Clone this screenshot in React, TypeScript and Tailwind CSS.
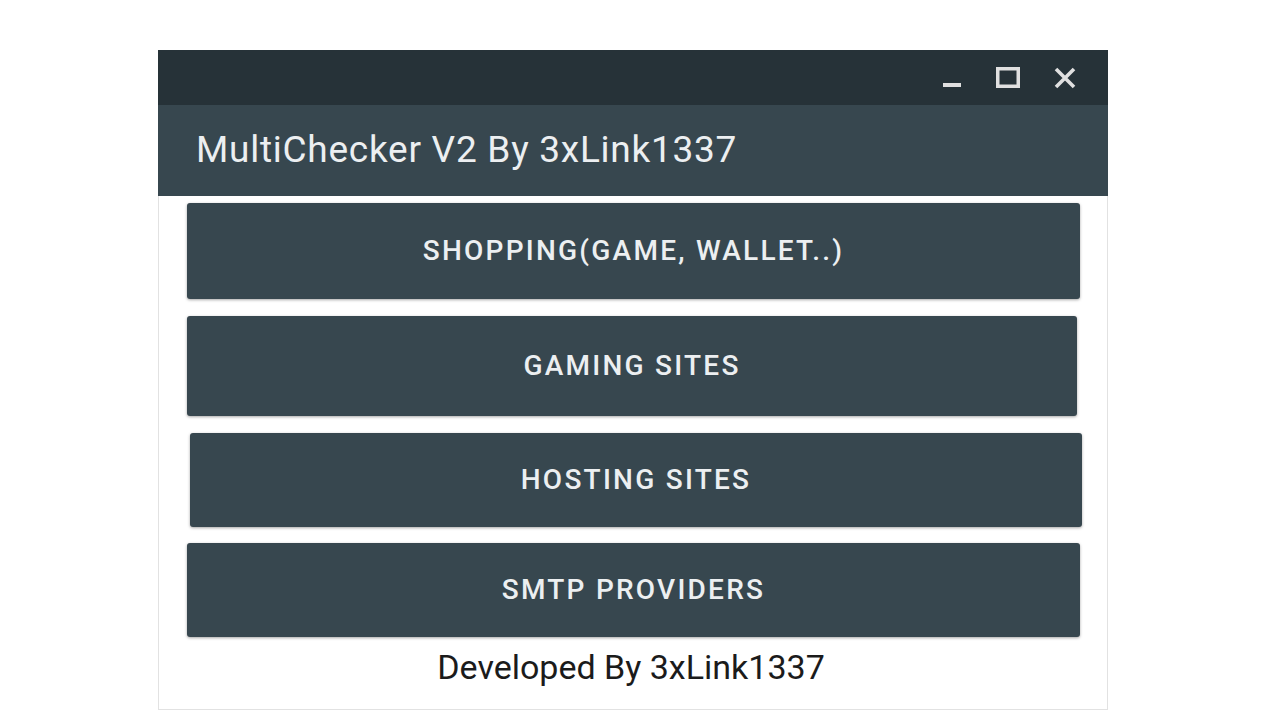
import React from "react";

const buttons = [
  { label: "SHOPPING(GAME, WALLET..)", cls: "mt-[7px] ml-[28px] w-[893px] h-[96px]" },
  { label: "GAMING SITES", cls: "mt-[17px] ml-[28px] w-[890px] h-[100px]" },
  { label: "HOSTING SITES", cls: "mt-[17px] ml-[31px] w-[892px] h-[94px]" },
  { label: "SMTP PROVIDERS", cls: "mt-[16px] ml-[28px] w-[893px] h-[94px]" },
];

export default function App() {
  return (
    <div className="w-[1280px] h-[720px] bg-white overflow-hidden font-['Roboto',sans-serif]">
      <div className="ml-[158px] mt-[50px] w-[950px] h-[660px] flex flex-col border border-[#e2e2e2] border-t-0">
        {/* window chrome */}
        <div className="h-[55px] bg-[#263238] flex items-center justify-end pr-[32px] gap-[34px] -mx-px">
          <svg width="20" height="20" viewBox="0 0 20 20" className="mt-[4px]">
            <rect x="1" y="13" width="18" height="4" fill="#e0e0e0" />
          </svg>
          <svg width="24" height="22" viewBox="0 0 24 22">
            <rect x="1.75" y="1.75" width="20.5" height="17.5" fill="none" stroke="#e0e0e0" strokeWidth="3.5" />
          </svg>
          <svg width="22" height="22" viewBox="0 0 22 22">
            <path d="M2 2 L20 20 M20 2 L2 20" stroke="#e0e0e0" strokeWidth="3.6" />
          </svg>
        </div>
        <div className="h-[91px] bg-[#37474f] flex items-center pl-[38px] -mx-px">
          <span className="text-[#eceff1] text-[37px] leading-none tracking-[0.02em] mt-[-2px]">
            MultiChecker V2 By 3xLink1337
          </span>
        </div>

        {buttons.map((b) => (
          <button
            key={b.label}
            className={`${b.cls} shrink-0 bg-[#37474f] rounded-[3px] shadow-[0_1px_3px_rgba(0,0,0,0.35)] flex items-center justify-center text-[#eceff1] text-[28px] font-medium tracking-[0.08em]`}
          >
            {b.label}
          </button>
        ))}

        <div className="mt-[9px] text-center text-[#1b1b1b] text-[34px] leading-[42px] pr-[4px]">
          Developed By 3xLink1337
        </div>
      </div>
    </div>
  );
}
